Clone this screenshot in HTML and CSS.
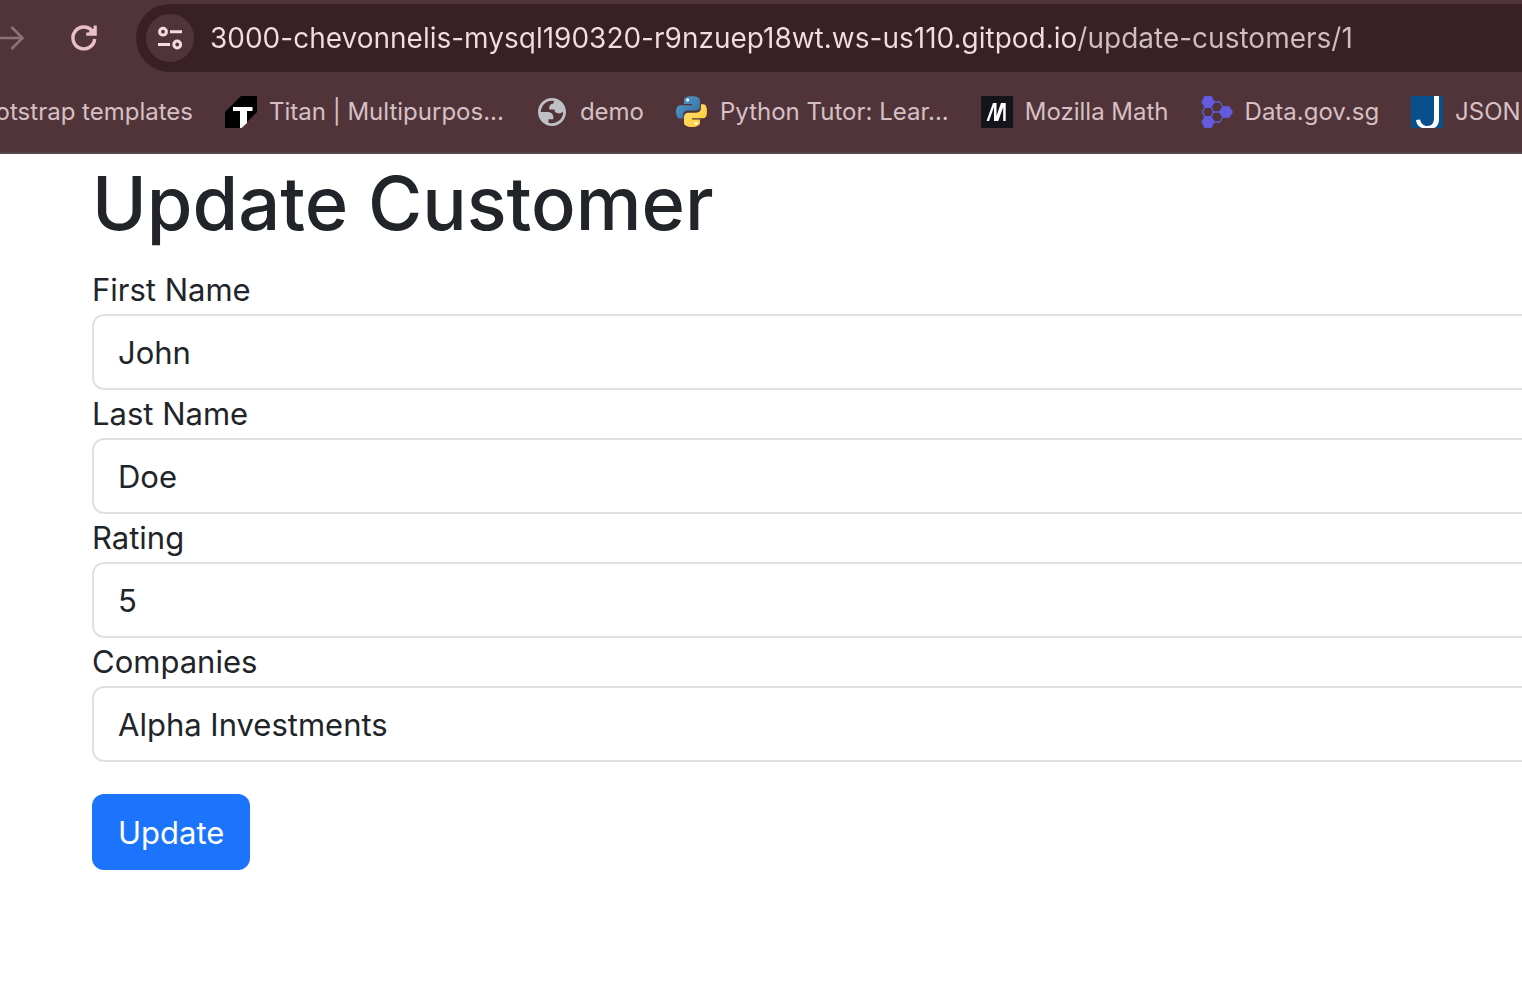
FILE: index.html
```html
<!DOCTYPE html>
<html lang="en">
<head>
<meta charset="utf-8">
<title>Update Customer</title>
<link rel="stylesheet" href="styles.css">
</head>
<body>
<header class="browser">
  <div class="toolbar">
    <button class="tool forward" type="button" aria-label="Forward">
      <svg viewBox="0 0 32 32" width="32" height="32" fill="none" stroke="currentColor" stroke-width="2.6"><path d="M2 16H27M16.500 5L27.500 16L16.500 27"/></svg>
    </button>
    <button class="tool reload" type="button" aria-label="Reload">
      <svg viewBox="0 0 32 32" width="32" height="32" fill="none" stroke="currentColor" stroke-width="3.400"><path d="M26.700 17A10.900 10.900 0 1 1 24.500 9.300L26 11"/><path d="M27.200 3.600V12.200H18.200" stroke-width="3.200"/><path d="M22 8L27 6V12H20Z" fill="currentColor" stroke="none"/></svg>
    </button>
    <div class="address">
      <button class="site-info" type="button" aria-label="View site information">
        <svg viewBox="0 0 28 28" width="28" height="28" fill="none" stroke="currentColor" stroke-width="3"><circle cx="7" cy="7.700" r="3.400"/><path d="M14 7.700H26M2 20.500H14"/><circle cx="21.200" cy="20.500" r="3.400"/></svg>
      </button>
      <input class="url" type="text" aria-label="Address" value="3000-chevonnelis-mysql190320-r9nzuep18wt.ws-us110.gitpod.io/update-customers/1">
    </div>
  </div>
  <nav class="bookmarks" aria-label="Bookmarks">
    <a class="bookmark clipped" href="#">Bootstrap templates</a>
    <a class="bookmark" href="#">
      <svg viewBox="0 0 32 32" width="32" height="32"><path d="M16 0H32V16L16 32H0V16Z" fill="#000"/><path d="M8 11H27.500V15H22V27L16.500 32H15V15H8Z" fill="#fff"/></svg>
      Titan | Multipurpos...</a>
    <a class="bookmark" href="#">
      <svg viewBox="0 0 32 32" width="32" height="32"><path transform="translate(-.8 -.8) scale(1.4)" fill="#bdc1c6" fill-rule="evenodd" d="M12 2C6.480 2 2 6.480 2 12s4.480 10 10 10 10-4.480 10-10S17.520 2 12 2zM4 12h4.400c3.407.022 4.922 1.730 4.543 5.127H9.488v2.470a8.004 8.004 0 0 0 10.498-8.080C19.327 12.507 18.332 13 17 13c-2.137 0-3.200-.917-3.200-2.750h-3.748c-.274-2.728.683-4.092 2.870-4.092 0-.975.327-1.597.811-1.970A8 8 0 0 0 4 12z"/></svg>
      demo</a>
    <a class="bookmark" href="#">
      <svg viewBox="0 0 32 32" width="32" height="32">
        <defs><linearGradient id="snake-blue" x1="0" y1="0" x2="1" y2="1"><stop offset="0" stop-color="#5a9fd4"/><stop offset="1" stop-color="#306998"/></linearGradient><linearGradient id="snake-gold" x1="0" y1="0" x2="1" y2="1"><stop offset="0" stop-color="#ffe873"/><stop offset="1" stop-color="#ffc331"/></linearGradient></defs>
        <path d="M16 .3C9 .3 8 2.500 8 4.800V8H16.200V9.200H4.600C1.500 9.200 0 12 0 16C0 20 1.600 22.600 4.300 22.600H7.200V18.800C7.200 16.200 9.300 14.400 12 14.400H20C22.300 14.400 24 12.600 24 10.500V4.800C24 1.500 20.500 .3 16 .3Z" fill="url(#snake-blue)"/>
        <path d="M25 8.200V12C25 14.800 23 16.700 20.300 16.700H12.200C9.800 16.700 8 18.500 8 20.800V26.800C8 29.500 11 31 16 31C21 31 24 29.500 24 26.800V23.400H16V22.200H27.300C30 22.200 31 19.500 31 15.500C31 11.500 30 8.200 27.300 8.200Z" fill="url(#snake-gold)"/>
        <circle cx="11.700" cy="4" r="1.500" fill="#fff"/><circle cx="20" cy="27.300" r="1.500" fill="#fff"/>
      </svg>
      Python Tutor: Lear...</a>
    <a class="bookmark" href="#">
      <svg viewBox="0 0 32 32" width="32" height="32"><path d="M0 0H32V32H0Z" fill="#15141a"/><path d="M5.500 25L12 7H15.500V20L20 7H24.700V25H22.200V11L17.300 25H13V11L8 25Z" fill="#fff"/></svg>
      Mozilla Math</a>
    <a class="bookmark" href="#">
      <svg viewBox="0 0 32 32" width="32" height="32" fill="none" stroke="#635bdf" stroke-width="1.300"><path d="M4 .6H10L13 6L10 11.200H4L1 6ZM4 20.800H10L13 26L10 31.400H4L1 26ZM22 10.800H28L31.200 16L28 21.200H22L19 16Z" fill="#635bdf"/><path d="M4 11.200H10L12.600 16L10 20.800H4L1.200 16ZM13 6H19L21.500 10.800L19 16H12.600L10 11.200ZM12.600 16H19L21.500 21.200L19 26H13L10 20.800Z"/></svg>
      Data.gov.sg</a>
    <a class="bookmark" href="#">
      <svg viewBox="0 0 32 32" width="32" height="32"><path d="M0 0H32V32H0Z" fill="#084f8c"/><path d="M23 0H28V23C28 28 26 31 23 32H11C7 30.500 5.500 27.500 5 24L9 23.500C10 27.500 12.500 30 16 30C21 30 23 27 23 22Z" fill="#fff"/></svg>
      JSON</a>
  </nav>
</header>
<main class="page">
  <form class="customer-form">
    <h1 class="title">Update Customer</h1>
    <label class="label" for="first-name">First Name</label>
    <input class="control" id="first-name" type="text" value="John">
    <label class="label" for="last-name">Last Name</label>
    <input class="control" id="last-name" type="text" value="Doe">
    <label class="label" for="rating">Rating</label>
    <input class="control" id="rating" type="text" value="5">
    <label class="label" for="company">Companies</label>
    <select class="control" id="company"><option>Alpha Investments</option></select>
    <button class="submit" type="button">Update</button>
  </form>
</main>
</body>
</html>
```
FILE: styles.css
```css
* { box-sizing: border-box; }

body {
  margin: 0;
  background: #fff;
  color: #212529;
  font-family: Inter, "Liberation Sans", sans-serif;
}

button, input, select { font: inherit; }

.browser {
  background: #513439;
  border-bottom: 2px solid #51474a;
  overflow: hidden;
}

.toolbar {
  display: flex;
  align-items: center;
  height: 76px;
}

.tool {
  display: flex;
  padding: 0;
  border: 0;
  background: none;
  flex: none;
}

.forward { color: #8b7377; margin-left: -5px; }
.reload { color: #e9bfc8; margin: 0 36px 0 41px; }

.address {
  display: flex;
  flex: 1;
  align-items: center;
  gap: 16px;
  height: 68px;
  padding-left: 10px;
  border-radius: 34px 0 0 34px;
  background: #382024;
}

.site-info {
  display: flex;
  flex: none;
  align-items: center;
  justify-content: center;
  width: 48px;
  height: 48px;
  padding: 0;
  border: 0;
  border-radius: 50%;
  background: #513439;
  color: #f4dde0;
}

/* The host part of the address is brighter than its path. */
.url {
  flex: 1;
  min-width: 0;
  padding: 0;
  border: 0;
  outline: 0;
  font-size: 28px;
  line-height: 40px;
  color: #f4dde0;
  background: linear-gradient(to right, #f4dde0 868px, #d0bfc1 868px);
  background-clip: text;
  -webkit-background-clip: text;
  -webkit-text-fill-color: transparent;
}

.bookmarks {
  display: flex;
  align-items: center;
  gap: 32px;
  height: 76px;
  padding-bottom: 4px;
}

.bookmark {
  display: flex;
  flex: none;
  align-items: center;
  gap: 12px;
  color: #d5c1c4;
  font-size: 24px;
  line-height: 32px;
  text-decoration: none;
  white-space: nowrap;
}

.clipped {
  justify-content: flex-end;
  width: 193px;
  overflow: hidden;
}

.page { overflow: hidden; }

/* The form runs past the right edge of the window. */
.customer-form {
  margin: 0 -24px 0 92px;
}

.title {
  margin: 0 0 16px;
  padding-top: 2px;
  font-size: 74px;
  font-weight: 500;
  line-height: 94px;
}

.label {
  display: block;
  font-size: 31px;
  line-height: 48px;
}

.control {
  display: block;
  width: 100%;
  height: 76px;
  padding: 0 24px;
  border: 2px solid #dee2e6;
  border-radius: 12px;
  background: #fff;
  color: #212529;
  font-size: 31px;
  appearance: none;
}

.submit {
  height: 76px;
  margin: 32px 0;
  padding: 0 26px;
  border: 0;
  border-radius: 12px;
  background: #1b74fb;
  color: #fff;
  font-size: 31px;
}
```
